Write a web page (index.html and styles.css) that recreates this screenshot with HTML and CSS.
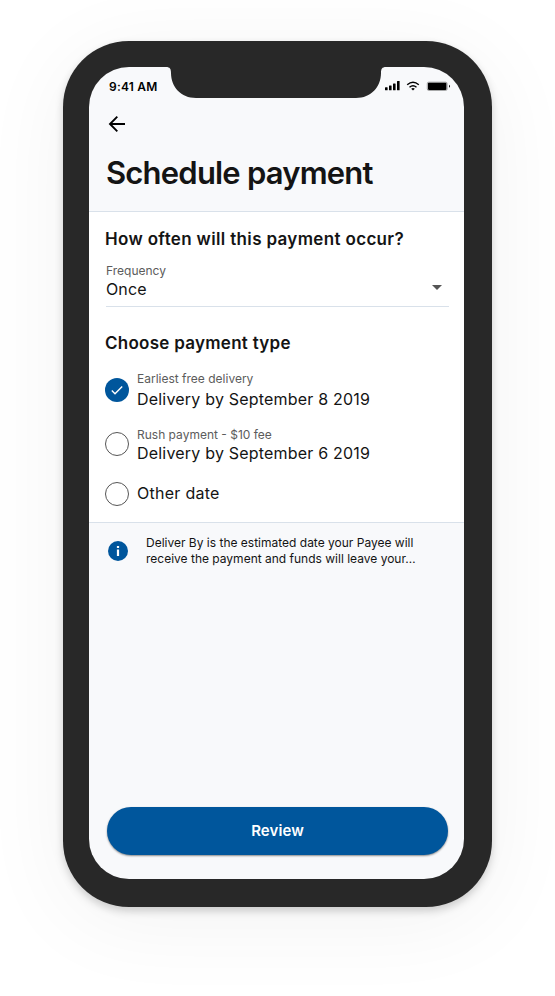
FILE: index.html
```html
<!DOCTYPE html>
<html lang="en">
<head>
<meta charset="utf-8">
<title>Schedule payment</title>
<link rel="stylesheet" href="styles.css">
</head>
<body>
<div class="phone">
  <div class="screen">
    <header class="header">
      <div class="status">
        <span class="time">9:41 AM</span>
        <svg class="notch" width="220" height="31" viewBox="0 0 220 31"><path d="M0 0C4 0 5 2 5 6C5 20 15 31 30 31H190C205 31 215 20 215 6C215 2 216 0 220 0Z"/></svg>
        <svg class="indicators" width="68" height="12" viewBox="0 0 68 12">
          <rect x="0" y="7.3" width="2.6" height="3" rx=".5"/><rect x="4" y="5.6" width="2.6" height="4.7" rx=".5"/><rect x="8" y="3.4" width="2.6" height="6.9" rx=".5"/><rect x="12" y="1" width="2.6" height="9.3" rx=".5"/>
          <g class="waves"><path d="M22.2 4.7Q28 -.4 33.8 4.7"/><path d="M24.5 7.2Q28 4.2 31.5 7.2"/></g>
          <path d="M26.2 8.7Q28 7.4 29.8 8.7L28 10.5Z"/>
          <rect class="battery" x="42.3" y="2.2" width="19.8" height="8.2" rx="1.4"/><rect x="43" y="2.7" width="18.4" height="7.2" rx=".8"/><path d="M64 4.8Q66 6.2 64 7.8Z"/>
        </svg>
      </div>
      <svg class="back" width="18" height="18" viewBox="0 0 18 18"><path d="M17 9H2.5M9.3 1.7L2 9L9.3 16.3"/></svg>
      <h1 class="title">Schedule payment</h1>
    </header>
    <main class="form">
      <h2 class="heading">How often will this payment occur?</h2>
      <div class="select">
        <div>
          <div class="label">Frequency</div>
          <div class="value once">Once</div>
        </div>
        <svg class="caret" width="10" height="5" viewBox="0 0 10 5"><path d="M0 0H10L5 5Z"/></svg>
      </div>
      <h2 class="heading type-heading">Choose payment type</h2>
      <div class="options">
        <div class="option">
          <svg class="radio selected" width="24" height="24" viewBox="0 0 24 24"><circle cx="12" cy="12" r="12"/><path d="M6.8 12.6L10 15.7L17.2 8.6"/></svg>
          <div class="spaced"><div class="label">Earliest free delivery</div><div class="value">Delivery by September 8 2019</div></div>
        </div>
        <div class="option">
          <svg class="radio" width="24" height="24" viewBox="0 0 24 24"><circle cx="12" cy="12" r="11.5"/></svg>
          <div><div class="label">Rush payment - $10 fee</div><div class="value">Delivery by September 6 2019</div></div>
        </div>
        <div class="option other">
          <svg class="radio" width="24" height="24" viewBox="0 0 24 24"><circle cx="12" cy="12" r="11.5"/></svg>
          <div class="value">Other date</div>
        </div>
      </div>
    </main>
    <section class="info">
      <svg class="info-icon" width="20" height="20" viewBox="0 0 20 20"><circle cx="10" cy="10" r="10"/><path d="M8.9 5H11.1V7.1H8.9ZM8.9 8.5H11.1V15H8.9Z"/></svg>
      <p class="note">Deliver By is the estimated date your Payee will<br>receive the payment and funds will leave your…</p>
    </section>
    <button class="review">Review</button>
  </div>
</div>
</body>
</html>
```

FILE: styles.css
```css
* { box-sizing: border-box; }
body { margin: 0; padding: 41px 63px 89px; background: #fff; font-family: Inter, "Liberation Sans", sans-serif; color: #141414; overflow: hidden; }
.phone { width: 429px; height: 866px; padding: 26px 28px 28px 26px; border-radius: 66px; background: #282828; box-shadow: 0 4px 8px rgba(0,0,0,.18), 0 14px 90px rgba(0,0,0,.055); }
.screen { display: flex; flex-direction: column; width: 375px; height: 812px; border-radius: 40px; overflow: hidden; background: #f8f9fb; }
.header { height: 145px; border-bottom: 1px solid #d9e1ea; }
.status { display: grid; grid-template-columns: 77px 220px 78px; height: 31px; }
.time { padding-left: 20px; font-size: 12px; line-height: 16px; margin-top: 12px; font-weight: 600; letter-spacing: .2px; color: #000; white-space: nowrap; }
.notch { display: block; fill: #282828; }
.indicators { margin: 13px 0 0 -1px; fill: #000; }
.waves { fill: none; stroke: #000; stroke-width: 1.4; }
.battery { fill: none; stroke: #777; stroke-width: .7; }
.back { display: block; margin: 17px 0 0 19px; fill: none; stroke: #000; stroke-width: 1.9; }
.title { margin: 20px 0 0 17px; font-size: 31px; line-height: 40px; font-weight: 600; letter-spacing: -.8px; white-space: nowrap; }
.form { height: 311px; padding: 15px 15px 0 16px; background: #fff; border-bottom: 1px solid #d9e1ea; }
.heading { margin: 0; font-size: 17px; line-height: 24px; font-weight: 600; letter-spacing: .34px; white-space: nowrap; }
.select { display: flex; justify-content: space-between; height: 56px; margin-left: 1px; padding: 12px 7px 0 0; border-bottom: 1px solid #d9e1ea; }
.caret { margin-top: 22px; fill: #555; }
.type-heading { margin-top: 24px; letter-spacing: .27px; }
.label { font-size: 12px; line-height: 16px; letter-spacing: 0; color: #5c5c5c; white-space: nowrap; }
.value { font-size: 16px; line-height: 20px; letter-spacing: .2px; white-space: nowrap; }
.once { letter-spacing: .1px; }
.options { padding-top: 16px; }
.option { display: flex; gap: 8px; height: 56px; }
.radio { flex: none; margin-top: 7px; fill: none; stroke: #555; stroke-width: 1; }
.option:nth-child(2) .radio { margin-top: 5px; }
.spaced .value { margin-top: 2px; }
.other .radio { margin-top: -1px; }
.other .value { letter-spacing: .27px; }
.selected circle { fill: #00569c; stroke: none; }
.selected path { stroke: #fff; stroke-width: 1.4; }
.info { display: flex; padding: 12px 19px; }
.info-icon { flex: none; margin: 6px 18px 0 0; fill: #00569c; }
.info-icon path { fill: #fff; }
.note { margin: 0; font-size: 12px; line-height: 16px; letter-spacing: 0; white-space: nowrap; }
.review { width: 341px; height: 48px; margin: auto 0 24px 18px; padding: 0; border: 0; border-radius: 24px; background: #00569c; color: #fff; font: 600 15px/20px Inter, sans-serif; letter-spacing: .1px; box-shadow: 0 1px 2px rgba(0,0,0,.45); }
```
